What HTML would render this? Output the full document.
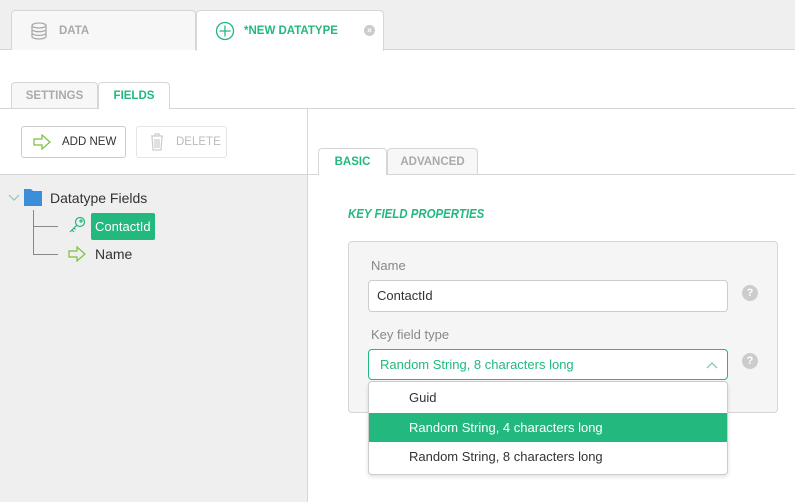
<!DOCTYPE html>
<html><head><style>
*{box-sizing:border-box;margin:0;padding:0}
body{width:795px;height:502px;overflow:hidden;position:relative;background:#fff;font-family:"Liberation Sans","DejaVu Sans",sans-serif;font-size:13px;color:#333}
.a{position:absolute}
.tab{position:absolute;border:1px solid #d6d6d6;border-bottom:none;border-radius:4px 4px 0 0;font-size:11.5px;font-weight:bold;display:flex;align-items:center}
.help{position:absolute;width:16px;height:16px;border-radius:50%;background:#ccc;color:#fff;font-size:11px;font-weight:bold;text-align:center;line-height:16px}
</style></head><body>
<div class="a" style="left:0;top:0;width:795px;height:50px;background:#efefef;border-bottom:1px solid #d6d6d6"></div>
<div class="tab" style="left:11px;top:10px;width:185px;height:40px;background:#f7f7f7;color:#aaa;padding-left:18px">
<svg width="18" height="18" viewBox="0 0 18 18" fill="none" stroke="#aaa" stroke-width="1.3"><ellipse cx="9" cy="3.5" rx="7" ry="2.5"/><path d="M2 3.5v11c0 1.4 3.1 2.5 7 2.5s7-1.1 7-2.5v-11M2 7.2c0 1.4 3.1 2.5 7 2.5s7-1.1 7-2.5M2 10.9c0 1.4 3.1 2.5 7 2.5s7-1.1 7-2.5"/></svg>
<span style="margin-left:11px">DATA</span></div>
<div class="tab" style="left:196px;top:10px;width:188px;height:41px;background:#fff;color:#22b87e;padding-left:18px">
<svg width="20" height="20" viewBox="0 0 20 20" fill="none" stroke="#22b87e" stroke-width="1.3"><circle cx="10" cy="10" r="8.5"/><path d="M10 4.5v11M4.5 10h11"/></svg>
<span style="margin-left:9px">*NEW DATATYPE</span>
<span style="position:absolute;left:167px;top:14px;width:11px;height:11px;border-radius:50%;background:#ccc;color:#fff;font-size:8px;line-height:11px;text-align:center">×</span></div>

<div class="a" style="left:0;top:108px;width:795px;height:1px;background:#d6d6d6"></div>
<div class="tab" style="left:11px;top:82px;width:87px;height:26px;background:#f7f7f7;color:#aaa;justify-content:center">SETTINGS</div>
<div class="tab" style="left:98px;top:82px;width:72px;height:27px;background:#fff;color:#22b87e;justify-content:center">FIELDS</div>

<div class="a" style="left:307px;top:108px;width:1px;height:394px;background:#d6d6d6"></div>
<div class="a" style="left:0;top:174px;width:307px;height:328px;background:#efefef;border-top:1px solid #d6d6d6"></div>

<div class="a" style="left:21px;top:126px;width:105px;height:32px;border:1px solid #ccc;border-radius:3px;background:#fff;display:flex;align-items:center;padding-left:11px;font-size:11.5px;color:#333">
<svg width="18" height="16" viewBox="0 0 18 16" fill="none" stroke="#7cbf3c" stroke-width="1.2"><path d="M1 5h8V1l8 7-8 7v-4H1z"/></svg><span style="margin-left:11px">ADD NEW</span></div>
<div class="a" style="left:136px;top:126px;width:91px;height:32px;border:1px solid #e4e4e4;border-radius:3px;background:#fff;display:flex;align-items:center;padding-left:13px;font-size:11.5px;color:#bbb">
<svg width="14" height="18" viewBox="0 0 14 18" fill="none" stroke="#ccc" stroke-width="1.2"><path d="M1 3h12M5 3V1h4v2M2 3l1 14h8l1-14M5 6v9M7 6v9M9 6v9"/></svg><span style="margin-left:12px">DELETE</span></div>

<svg class="a" style="left:8px;top:193px" width="12" height="10" viewBox="0 0 12 10" fill="none" stroke="#8cc9b0" stroke-width="1.2"><path d="M1 2l5 5 5-5"/></svg>
<svg class="a" style="left:24px;top:189px" width="18" height="17" viewBox="0 0 18 17"><path d="M0 0h7l2 2h9v15H0z" fill="#3b8fd9"/></svg>
<div class="a" style="left:50px;top:190px;font-size:14px;color:#333">Datatype Fields</div>
<div class="a" style="left:33px;top:210px;width:1px;height:45px;background:#888"></div>
<div class="a" style="left:33px;top:226px;width:25px;height:1px;background:#888"></div>
<div class="a" style="left:33px;top:254px;width:25px;height:1px;background:#888"></div>
<svg class="a" style="left:68px;top:216px" width="18" height="18" viewBox="0 0 18 18" fill="none" stroke="#22b87e" stroke-width="1.2"><circle cx="12" cy="6" r="4.5"/><circle cx="13" cy="5" r="1"/><path d="M9 9l-7 7M4 14l2 2M6 12l1.5 1.5"/></svg>
<div class="a" style="left:91px;top:213px;width:64px;height:27px;background:#22b87e;color:#fff;border-radius:2px;font-size:13px;line-height:27px;padding-left:4px;white-space:nowrap;overflow:hidden">ContactId</div>
<svg class="a" style="left:68px;top:246px" width="18" height="16" viewBox="0 0 18 16" fill="none" stroke="#7cbf3c" stroke-width="1.2"><path d="M1 5h8V1l8 7-8 7v-4H1z"/></svg>
<div class="a" style="left:95px;top:246px;font-size:14px;color:#333">Name</div>

<div class="a" style="left:307px;top:174px;width:488px;height:1px;background:#d6d6d6"></div>
<div class="tab" style="left:318px;top:148px;width:69px;height:27px;background:#fff;color:#22b87e;justify-content:center">BASIC</div>
<div class="tab" style="left:387px;top:148px;width:91px;height:26px;background:#f7f7f7;color:#aaa;justify-content:center">ADVANCED</div>

<div class="a" style="left:348px;top:206px;font-size:13px;font-weight:bold;font-style:italic;color:#22b87e;transform:scaleX(0.88);transform-origin:left">KEY FIELD PROPERTIES</div>
<div class="a" style="left:348px;top:241px;width:430px;height:172px;background:#f5f5f5;border:1px solid #d6d6d6;border-radius:4px"></div>
<div class="a" style="left:371px;top:258px;color:#888">Name</div>
<div class="a" style="left:368px;top:280px;width:360px;height:32px;background:#fff;border:1px solid #ccc;border-radius:4px;padding-left:8px;line-height:30px;color:#333">ContactId</div>
<div class="help" style="left:742px;top:285px">?</div>
<div class="a" style="left:371px;top:327px;color:#888">Key field type</div>
<div class="a" style="left:368px;top:349px;width:360px;height:31px;background:#fff;border:1px solid #22b87e;border-radius:4px;padding-left:11px;line-height:29px;color:#22b87e">Random String, 8 characters long
<svg style="position:absolute;right:9px;top:11px" width="12" height="8" viewBox="0 0 12 8" fill="none" stroke="#8cc9b0" stroke-width="1.3"><path d="M1 7l5-5 5 5"/></svg></div>
<div class="help" style="left:742px;top:353px">?</div>
<div class="a" style="left:368px;top:381px;width:360px;height:94px;background:#fff;border:1px solid #ccc;border-radius:4px;box-shadow:0 2px 4px rgba(0,0,0,.12);overflow:hidden">
<div style="height:31px;line-height:31px;padding-left:40px;color:#333">Guid</div>
<div style="height:29px;line-height:29px;padding-left:40px;color:#fff;background:#22b87e">Random String, 4 characters long</div>
<div style="height:30px;line-height:30px;padding-left:40px;color:#333">Random String, 8 characters long</div>
</div>
</body></html>
